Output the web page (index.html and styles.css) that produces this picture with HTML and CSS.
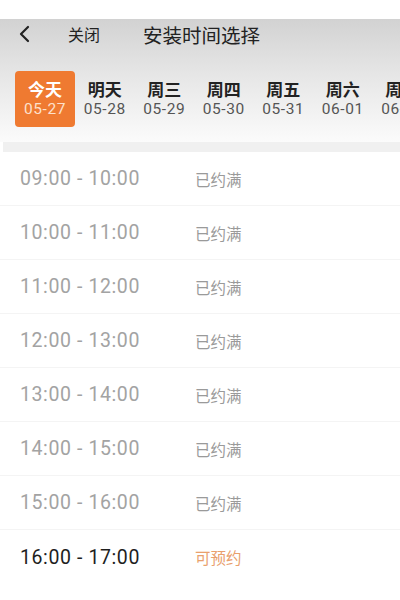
FILE: index.html
```html
<!DOCTYPE html>
<html lang="zh-CN">
<head>
  <meta charset="UTF-8">
  <meta name="viewport" content="width=device-width, initial-scale=1.0">
  <title>安装时间选择</title>
  <link rel="stylesheet" href="styles.css">
</head>
<body>
  <div class="page">
    <header class="top">
      <div class="nav">
        <svg class="back" width="14" height="18" viewBox="0 0 14 18" aria-hidden="true">
          <path d="M10 2 L3 9 L10 16" fill="none" stroke="#222" stroke-width="2.2" stroke-linecap="round" stroke-linejoin="round"/>
        </svg>
        <span class="close">关闭</span>
        <span class="title">安装时间选择</span>
      </div>
      <div class="days">
        <div class="day active"><b>今天</b><span>05-27</span></div>
        <div class="day"><b>明天</b><span>05-28</span></div>
        <div class="day"><b>周三</b><span>05-29</span></div>
        <div class="day"><b>周四</b><span>05-30</span></div>
        <div class="day"><b>周五</b><span>05-31</span></div>
        <div class="day"><b>周六</b><span>06-01</span></div>
        <div class="day"><b>周日</b><span>06-02</span></div>
      </div>
    </header>
    <div class="gap"></div>
    <ul class="slots">
      <li class="slot"><span class="time">09:00 - 10:00</span><span class="state">已约满</span></li>
      <li class="slot"><span class="time">10:00 - 11:00</span><span class="state">已约满</span></li>
      <li class="slot"><span class="time">11:00 - 12:00</span><span class="state">已约满</span></li>
      <li class="slot"><span class="time">12:00 - 13:00</span><span class="state">已约满</span></li>
      <li class="slot"><span class="time">13:00 - 14:00</span><span class="state">已约满</span></li>
      <li class="slot"><span class="time">14:00 - 15:00</span><span class="state">已约满</span></li>
      <li class="slot"><span class="time">15:00 - 16:00</span><span class="state">已约满</span></li>
      <li class="slot open"><span class="time">16:00 - 17:00</span><span class="state">可预约</span></li>
    </ul>
  </div>
</body>
</html>
```

FILE: styles.css
```css
* {
  box-sizing: border-box;
  margin: 0;
  padding: 0;
}

body {
  font-family: "Noto Sans CJK SC", "Noto Sans", sans-serif;
  background: #fff;
  color: #222;
  width: 400px;
  height: 600px;
  overflow: hidden;
}

.page {
  padding-top: 19px;
}

/* Header */
.top {
  height: 123px;
  background: linear-gradient(to bottom, #d2d2d2 0%, #e6e6e6 45%, #fbfbfb 100%);
  overflow: hidden;
}

.nav {
  display: flex;
  align-items: center;
  height: 30px;
  padding-left: 18px;
}

.back {
  flex: none;
}

.close {
  font-size: 16px;
  margin-left: 36px;
  color: #222;
}

.title {
  font-size: 19.5px;
  margin-left: 43px;
  color: #222;
}

.days {
  display: flex;
  padding: 22px 0 0 15px;
  white-space: nowrap;
}

.day {
  flex: none;
  width: 59.5px;
  height: 56px;
  display: flex;
  flex-direction: column;
  align-items: center;
  justify-content: center;
  gap: 1px;
  border-radius: 4px;
}

.day b {
  font-size: 17px;
  line-height: 20px;
  font-weight: 700;
  color: #222;
}

.day span {
  font-family: Roboto, "Noto Sans", sans-serif;
  font-size: 15.5px;
  line-height: 19px;
  letter-spacing: 0.6px;
  color: #555;
}

.day.active {
  width: 60px;
  background: #ef7a31;
}

.day.active b {
  color: #fff;
}

.day.active span {
  color: #fde1cc;
}

.gap {
  height: 10px;
  margin-left: 3px;
  background: #f0f0f0;
}

/* Slots */
.slots {
  list-style: none;
}

.slot {
  display: flex;
  align-items: center;
  height: 54px;
  padding-left: 20px;
  border-bottom: 1px solid #f4f4f4;
}

.time {
  width: 175px;
  font-family: Roboto, "Noto Sans", sans-serif;
  font-size: 19.5px;
  letter-spacing: 0.6px;
  color: #a3a3a3;
}

.state {
  font-size: 15.5px;
  color: #9a9a9a;
}

.slot.open {
  border-bottom: none;
}

.slot.open .time {
  color: #1e1e1e;
}

.slot.open .state {
  color: #e9a06d;
}
```
